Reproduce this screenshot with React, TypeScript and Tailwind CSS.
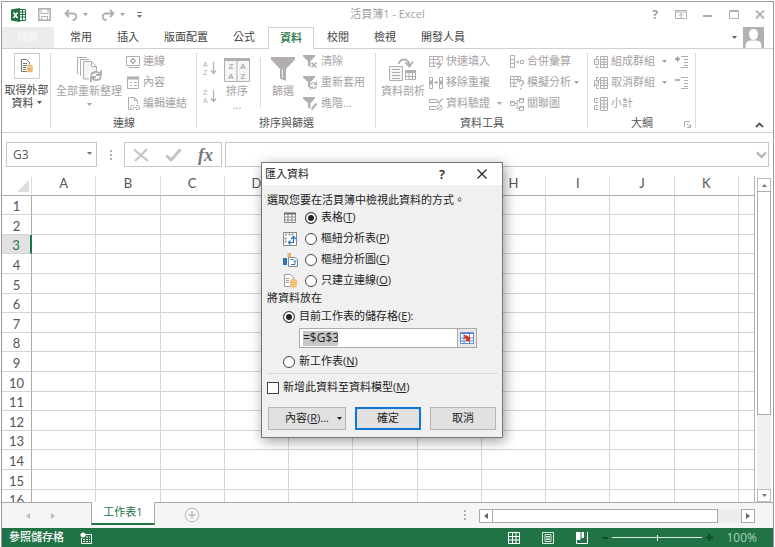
import type { ReactNode } from "react";
import clsx from "clsx";

const columns = ["A", "B", "C", "D", "E", "F", "G", "H", "I", "J", "K"];
const rows = Array.from({ length: 16 }, (_, i) => i + 1);
const tabs = ["常用", "插入", "版面配置", "公式", "資料", "校閱", "檢視", "開發人員"];

const gray = "#b2adb1";

function Icon({ w = 14, h = 14, children }: { w?: number; h?: number; children: ReactNode }) {
  return (
    <svg width={w} height={h} viewBox={`0 0 ${w} ${h}`} fill="none" stroke={gray} className="shrink-0" aria-hidden="true">
      {children}
    </svg>
  );
}

function Caret({ className }: { className?: string }) {
  return (
    <svg width="5" height="3" viewBox="0 0 5 3" className={clsx("shrink-0 fill-current", className)} aria-hidden="true">
      <path d="M0 0h5L2.500 3z" />
    </svg>
  );
}

function Dots() {
  return (
    <div className="flex flex-col gap-[2px]">
      <span className="size-[2px] bg-[#b0b0b0]" />
      <span className="size-[2px] bg-[#b0b0b0]" />
      <span className="size-[2px] bg-[#b0b0b0]" />
    </div>
  );
}

/* ---------- ribbon ---------- */

function Group({ label, className, children }: { label?: string; className?: string; children: ReactNode }) {
  return (
    <section className={clsx("relative flex shrink-0 flex-col pt-[2px]", className)}>
      <div className="flex h-[63px]">{children}</div>
      <div className="h-[18px] text-center leading-[18px] text-[#555]">{label}</div>
      <span className="absolute top-1 right-0 bottom-1 w-px bg-[#dcdcdc]" />
    </section>
  );
}

function BigButton({ icon, label, below, className }: { icon: ReactNode; label: string; below?: ReactNode; className?: string }) {
  return (
    <button className={clsx("flex shrink-0 flex-col items-center pt-1 whitespace-nowrap text-[#a5a1a4]", className)}>
      <span className="flex h-[29px] items-center">{icon}</span>
      <span className="leading-[14px]">{label}</span>
      {below}
    </button>
  );
}

function SmallButton({ icon, label, caret }: { icon: ReactNode; label: string; caret?: string }) {
  return (
    <button className="flex h-[21px] items-center gap-[3px] whitespace-nowrap text-[#a5a1a4]">
      {icon}
      <span>{label}</span>
      {caret && <Caret className={caret} />}
    </button>
  );
}

const ExternalDataIcon = () => (
  <Icon w={14} h={16}>
    <path d="M1.500 1.500h5l3 3v9h-8z" stroke="#777" fill="#fff" />
    <path d="M3 5.500h4M3 7.500h4M3 9.500h3M3 11.500h3" stroke="#777" />
    <path d="M7 8c0-2 6-2 6 0v5c0 2-6 2-6 0z" fill="#e9b568" stroke="#fff" strokeWidth=".5" />
    <path d="M7.500 8.500c1 1 4 1 5 0" stroke="#fff" strokeWidth=".6" />
  </Icon>
);

const RefreshAllIcon = () => (
  <Icon w={27} h={27}>
    <path d="M1.500 18V1.500H11M4.500 20V3.500H13" />
    <path d="M7.500 5.500h8l5 5v6h-7v6.500h-6zM15.500 5.500v5h5" fill="#f7f4f7" />
    <path d="M13 15h13v11H13z" fill="#fff" stroke="none" />
    <path d="M15 19.500c1-4 7-5 9-1M25 14v5h-5M25 20.500c-1 4-7 5-9 1M15 26v-5h5" strokeWidth="1.800" />
  </Icon>
);

const ConnectionIcon = () => (
  <Icon>
    <path d="M.5 1.500h13v9H.5zM3 12.500h11" />
    <path d="M7 3.500L9.500 6 7 8.500 4.500 6z" strokeWidth="1.500" />
  </Icon>
);

const PropertiesIcon = () => (
  <Icon>
    <path d="M1.500 1.500h11v11h-11z" />
    <path d="M1 2h12" strokeWidth="3" />
    <path d="M4 6.500h2M8 6.500h3M4 9.500h2M8 9.500h3" />
  </Icon>
);

const EditLinksIcon = () => (
  <Icon>
    <path d="M5 12.500H2.500V.5h6l3 3v3M8.500.5v3h3" />
    <path d="M8 12.500H6.500a2 2 0 010-4H8M10 8.500h1.500a2 2 0 010 4H10M7 10.500h4" />
  </Icon>
);

function SortIcon({ top, bottom }: { top: string; bottom: string }) {
  return (
    <svg width="14" height="18" viewBox="0 0 14 18" className="font-['Liberation_Sans',sans-serif]" aria-hidden="true">
      <text x="0" y="8" fontSize="7" fill={gray}>{top}</text>
      <text x="0" y="16" fontSize="7" fill={gray}>{bottom}</text>
      <path d="M10.500 3v11M8 11.500l2.500 3 2.500-3" fill="none" stroke={gray} strokeWidth="1.200" />
    </svg>
  );
}

const SortDialogIcon = () => (
  <svg width="26" height="24" viewBox="0 0 26 24" className="font-['Liberation_Sans',sans-serif]" aria-hidden="true">
    <path d="M.5 1.500h25v22H.5zM13 3v20" fill="#f7f4f7" stroke={gray} />
    <path d="M0 0h26v3H0z" fill={gray} />
    <g fontSize="8" fontWeight="700" fill={gray} textAnchor="middle">
      <text x="7" y="11">Z</text>
      <text x="7" y="21">A</text>
      <text x="19" y="11">A</text>
      <text x="19" y="21">Z</text>
    </g>
  </svg>
);

const FunnelIcon = () => (
  <Icon w={24} h={25}>
    <path d="M0 0h24v2.500L15 12v12l-6-2.500V12L0 2.500z" fill={gray} stroke="none" />
    <path d="M11.500 12v9" stroke="#e8e5e8" />
  </Icon>
);

const funnel = <path d="M0 0h12v1.500L7.500 6v6L5 11V6L0 1.500z" fill={gray} stroke="none" />;

const ClearIcon = () => (
  <Icon w={15}>{funnel}<path d="M8.500 7.500l5 5M13.500 7.500l-5 5" strokeWidth="1.500" /></Icon>
);

const ReapplyIcon = () => (
  <Icon w={15}>
    {funnel}
    <path d="M7 6h7v7H7z" fill="#fff" stroke="none" />
    <path d="M7.500 9c1-3 4-3 6-1M13.500 5.500V8.500H11M13.500 10c-1 3-4 3-5.500 1M7.500 13.500V11H10" strokeWidth="1.200" />
  </Icon>
);

const AdvancedIcon = () => (
  <Icon w={15}>{funnel}<path d="M13.500 6L8 12.500" stroke="#fff" strokeWidth="4" /><path d="M13.500 6.500L8.500 12.500" strokeWidth="2" /></Icon>
);

const TextToColumnsIcon = () => (
  <Icon w={28} h={24}>
    <path d="M9.500 6c2-6 10-6 11 1M16.500 4.500l4 4 3.500-5" strokeWidth="1.800" />
    <path d="M.5 8.500h13v14H.5z" fill="#f7f4f7" />
    <path d="M3 11.500h8M3 14.500h8M3 17.500h8M3 20.500h8" />
    <path d="M16.500 12.500h10v9h-10zM20 13v8M23.500 13v8M17 18.500h9" />
    <path d="M16 13.500h11" strokeWidth="3" />
  </Icon>
);

const FlashFillIcon = () => (
  <Icon>
    <path d="M7 11.500H.5v-10h13v4M1 4.500h9M1 8h7M4.500 2v9M9 2v3" />
    <path d="M11.500 5l-3 4h4l-4 4.500" strokeWidth="1.300" />
  </Icon>
);

const RemoveDuplicatesIcon = () => (
  <Icon>
    <path d="M.5 1.500h3v11h-3zM10.500 1.500h3v11h-3z" />
    <path d="M0 6.500h4M10 6.500h4" strokeWidth="4" />
    <path d="M5 6.500h4M7.500 5v3" />
  </Icon>
);

const ValidationIcon = () => (
  <Icon>
    <path d="M8 2.500H.5v3H8M7 9.500H.5v3H7" />
    <path d="M8 3.500L10 6l3.500-4.500" strokeWidth="1.300" />
    <circle cx="10.500" cy="10.500" r="2.500" />
    <path d="M9 12l3-3" />
  </Icon>
);

const ConsolidateIcon = () => (
  <Icon>
    <path d="M.5.5h4v12h-4zM.5 4.500h4M.5 8.500h4M10.500 5.500h3v3h-3z" />
    <path d="M5.500 7h3.500M7.500 5.500L9 7 7.500 8.500" />
  </Icon>
);

const WhatIfIcon = () => (
  <Icon>
    <path d="M7 10.500H.5v-10h10v3M1 3.500h9M1 7h6M4 1v9M7.500 1v5" />
    <path d="M9 6.500c0-3 4.500-2.500 4.500 0 0 1.500-2.500 2-2.500 4M11 12v1.500" strokeWidth="1.500" />
  </Icon>
);

const RelationIcon = () => (
  <Icon>
    <path d="M.5 4.500h4v4h-4zM9.500 1.500h4v4h-4zM9.500 9.500h4v4h-4zM4.500 6.500H7M7 3.500v8M7 3.500h2M7 11.500h2" />
    <path d="M9 2h5M9 10h5M0 5h5" strokeWidth="1.500" />
  </Icon>
);

function OutlineIcon({ slash }: { slash?: boolean }) {
  return (
    <Icon>
      <path d="M6.500 1.500h7v11h-7zM10 1.500v11M6.500 4.500h7M6.500 7h7M6.500 9.500h7M5 1.500H2.500v3M5 12.500H2.500v-2M.5 4.500h4v5h-4z" />
      {slash ? <path d="M0 11L6 3" /> : <path d="M1.500 7h2" />}
    </Icon>
  );
}

const SubtotalIcon = () => (
  <Icon>
    <path d="M6.500.5h7v13h-7zM10 .5v13M6.500 3.500h7M6.500 7h7M6.500 10h7" />
    <path d="M4.500 1.500h-4v4h4M4.500 8.500h-4v4h4M2 3.500h2M2 10.500h2" />
  </Icon>
);

function DetailIcon({ plus }: { plus?: boolean }) {
  return (
    <Icon>
      <path d="M6 1.500h7M9 4.500h4M9 7.500h4M9 10.500h4M6 12.500h7" />
      <path d={plus ? "M0 4h5M2.500 1.500v5" : "M0 4h5"} strokeWidth="1.500" stroke="#999" />
    </Icon>
  );
}

function Ribbon() {
  return (
    <div className="flex h-[84px] border-b border-[#d0d0d0]">
      <Group className="w-[49px]">
        <button className="flex flex-1 flex-col items-center pt-[2px] text-[#444]">
          <span className="flex size-[26px] items-center justify-center border border-[#ccc]">
            <ExternalDataIcon />
          </span>
          <span className="mt-1 leading-[13px] whitespace-nowrap">取得外部</span>
          <span className="flex items-center gap-[3px] leading-[13px]">資料<Caret className="text-[#555]" /></span>
        </button>
      </Group>
      <Group label="連線" className="w-[146px]">
        <BigButton className="ml-[5px]" icon={<RefreshAllIcon />} label="全部重新整理" below={<Caret className="mt-[5px]" />} />
        <div className="ml-1">
          <SmallButton icon={<ConnectionIcon />} label="連線" />
          <SmallButton icon={<PropertiesIcon />} label="內容" />
          <SmallButton icon={<EditLinksIcon />} label="編輯連結" />
        </div>
      </Group>
      <Group label="排序與篩選" className="w-[179px]">
        <div className="ml-[6px] flex flex-col gap-[10px] pt-2">
          <button aria-label="從 A 到 Z 排序"><SortIcon top="A" bottom="Z" /></button>
          <button aria-label="從 Z 到 A 排序"><SortIcon top="Z" bottom="A" /></button>
        </div>
        <BigButton className="ml-[7px]" icon={<SortDialogIcon />} label="排序" below={<span className="leading-[14px]">...</span>} />
        <span className="mt-[7px] ml-[10px] h-[50px] w-px bg-[#dcdcdc]" />
        <BigButton className="ml-[10px]" icon={<FunnelIcon />} label="篩選" />
        <div className="ml-2">
          <SmallButton icon={<ClearIcon />} label="清除" />
          <SmallButton icon={<ReapplyIcon />} label="重新套用" />
          <SmallButton icon={<AdvancedIcon />} label="進階..." />
        </div>
      </Group>
      <Group label="資料工具" className="w-[212px]">
        <BigButton className="ml-[5px]" icon={<TextToColumnsIcon />} label="資料剖析" />
        <div className="ml-1">
          <SmallButton icon={<FlashFillIcon />} label="快速填入" />
          <SmallButton icon={<RemoveDuplicatesIcon />} label="移除重複" />
          <SmallButton icon={<ValidationIcon />} label="資料驗證" caret="ml-1" />
        </div>
        <div className="ml-2">
          <SmallButton icon={<ConsolidateIcon />} label="合併彙算" />
          <SmallButton icon={<WhatIfIcon />} label="模擬分析" caret="ml-0" />
          <SmallButton icon={<RelationIcon />} label="關聯圖" />
        </div>
      </Group>
      <Group label="大綱" className="w-[108px]">
        <div className="ml-[6px]">
          <SmallButton icon={<OutlineIcon />} label="組成群組" caret="ml-1" />
          <SmallButton icon={<OutlineIcon slash />} label="取消群組" caret="ml-1" />
          <SmallButton icon={<SubtotalIcon />} label="小計" />
        </div>
        <div className="ml-2">
          <button aria-label="顯示詳細資料" className="flex h-[21px] items-center"><DetailIcon plus /></button>
          <button aria-label="隱藏詳細資料" className="flex h-[21px] items-center"><DetailIcon /></button>
        </div>
        <button aria-label="大綱設定" className="absolute right-[5px] bottom-1">
          <Icon w={7} h={7}><path d="M.5 6V.5H6M3 3l3.500 3.500M6.500 3v3.500H3" /></Icon>
        </button>
      </Group>
      <div className="flex flex-1 items-end justify-end pr-[9px] pb-1">
        <button aria-label="摺疊功能區">
          <Icon w={9} h={6}><path d="M1 5l3.500-3.500L8 5" stroke="#555" strokeWidth="1.800" /></Icon>
        </button>
      </div>
    </div>
  );
}

/* ---------- window frame ---------- */

function TitleBar() {
  return (
    <header className="grid h-[25px] grid-cols-[1fr_auto_1fr] items-center text-[#a0a0a0]">
      <div className="flex items-center pl-[9px]">
        <svg width="15" height="14" viewBox="0 0 15 14" aria-hidden="true">
          <path d="M8 1.500h6.500v11H8" fill="#fff" stroke="#217346" />
          <path d="M9 4h5M9 6.500h5M9 9h5M11.500 2v10" stroke="#217346" />
          <path d="M0 1.500L9 0v14L0 12.500z" fill="#217346" />
          <path d="M2.500 4.500l4 5.500M6.500 4.500l-4 5.500" stroke="#fff" strokeWidth="1.500" />
        </svg>
        <button aria-label="儲存" className="ml-3">
          <Icon w={13} h={13}>
            <path d="M.8.8h11.400v11.400H.8z" strokeWidth="1.500" />
            <path d="M3 1v4.500h7V1M3.500 12V8.500h6V12" />
          </Icon>
        </button>
        <button aria-label="復原" className="ml-[13px] flex items-center gap-[5px]">
          <Icon w={14} h={12}><path d="M5 1L1.500 4.500 5 8M2 4.500h6.500c5 0 5 6.500 0 6.500" strokeWidth="1.800" /></Icon>
          <Caret />
        </button>
        <button aria-label="重複" className="ml-[13px] flex items-center gap-[5px]">
          <Icon w={14} h={12}><path d="M9 1l3.500 3.500L9 8M12 4.500H5.500c-5 0-5 6.500 0 6.500" strokeWidth="1.800" /></Icon>
          <Caret />
        </button>
        <button aria-label="自訂快速存取工具列" className="ml-3 flex flex-col items-center gap-[2px] text-[#777]">
          <span className="h-px w-[5px] bg-[#777]" />
          <Caret />
        </button>
      </div>
      <h1 className="whitespace-nowrap">活頁簿1 - Excel</h1>
      <div className="flex items-center justify-end pr-2">
        <button aria-label="說明" className="text-[12px] leading-none font-bold">?</button>
        <button aria-label="功能區顯示選項" className="ml-[17px]">
          <Icon w={12} h={9}><path d="M.5.5h11v8H.5zM1 2h10M6 8V3.500M4 5.500l2-2 2 2" /></Icon>
        </button>
        <button aria-label="最小化" className="ml-[16px]">
          <Icon w={9} h={9}><path d="M0 6h9" strokeWidth="2" /></Icon>
        </button>
        <button aria-label="最大化" className="ml-[17px]">
          <Icon w={10} h={9}><path d="M.5.5h9v8h-9zM0 1.500h10" /></Icon>
        </button>
        <button aria-label="關閉" className="ml-[16px]">
          <Icon w={10} h={9}><path d="M1 .5l8 8M9 .5l-8 8" strokeWidth="1.800" /></Icon>
        </button>
      </div>
    </header>
  );
}

function TabBar() {
  return (
    <nav className="flex h-[22px] items-stretch border-b border-[#d0d0d0] text-[#444]">
      <button className="mr-1 w-[52px] bg-[#ececec] text-[#f8f8f8]">檔案</button>
      <div className="flex gap-px">
        {tabs.map((tab) => (
          <button
            key={tab}
            className={clsx(
              "whitespace-nowrap",
              tab === "資料" ? "-mb-px border border-b-0 border-[#d0d0d0] bg-white px-[11px] font-medium text-[#217346]" : "px-3",
            )}
          >
            {tab}
          </button>
        ))}
      </div>
      <button aria-label="帳戶" className="ml-auto flex items-center gap-[6px] pr-[9px] text-[#666]">
        <Caret />
        <svg width="21" height="21" viewBox="0 0 21 21" aria-hidden="true">
          <path d="M0 0h21v21H0z" fill="#b1b1b1" />
          <path d="M10.500 2c3 0 4.500 2 4.500 5s-2 6-4.500 6S6 10 6 7s1.500-5 4.500-5zM2.500 21c0-5 1-7 5-7.500h6c4 .5 5 2.500 5 7.500z" fill="#fff" />
        </svg>
      </button>
    </nav>
  );
}

function FormulaBar() {
  return (
    <div className="flex items-center px-1 py-[9px]">
      <div className="relative">
        <input aria-label="名稱方塊" defaultValue="G3" className="block h-[25px] w-[91px] border border-[#c6c6c6] px-[6px] text-[12px] text-[#555] outline-none" />
        <Caret className="pointer-events-none absolute top-[10px] right-[5px] text-[#777]" />
      </div>
      <div className="flex w-[27px] justify-center"><Dots /></div>
      <div className="flex h-[25px] w-[98px] items-center border border-[#c6c6c6]">
        <button aria-label="取消輸入" className="ml-2">
          <Icon w={16} h={14}><path d="M1 1.500l14 11.500M14 1L2 13" stroke="#c4c4c4" strokeWidth="2" /></Icon>
        </button>
        <button aria-label="輸入" className="ml-4">
          <Icon w={17} h={14}><path d="M1.500 7.500L6 12 15.500 1.500" stroke="#c4c4c4" strokeWidth="3" /></Icon>
        </button>
        <button aria-label="插入函數" className="ml-4 font-['Liberation_Serif',serif] text-[18px] leading-none font-bold text-[#777] italic">fx</button>
      </div>
      <div className="relative ml-[3px] flex-1">
        <input aria-label="資料編輯列" className="block h-[25px] w-full border border-[#c6c6c6] px-2 outline-none" />
        <svg width="11" height="8" viewBox="0 0 11 8" className="absolute top-[9px] right-[2px]" aria-hidden="true">
          <path d="M1 1.500l4.500 4.500L10 1.500" fill="none" stroke="#bbb" strokeWidth="2.500" />
        </svg>
      </div>
    </div>
  );
}

function Sheet() {
  return (
    <div className="flex min-h-0 flex-1">
      <div className="min-w-0 flex-1 overflow-hidden border-r border-[#b5b5b5]">
        <table className="w-full table-fixed border-separate border-spacing-0 font-[Lato,sans-serif] text-[13px] leading-none text-[#555]">
          <colgroup>
            <col className="w-[30px]" />
            {columns.map((c) => <col key={c} />)}
            <col className="w-[15px]" />
          </colgroup>
          <thead>
            <tr className="h-5">
              <th className="border-r border-b border-r-[#ddd] border-b-[#ababab] p-0">
                <svg width="12" height="12" viewBox="0 0 12 12" className="mt-px mr-[2px] ml-auto" aria-hidden="true">
                  <path d="M12 0v12H0z" fill="#ddd" />
                </svg>
              </th>
              {columns.map((c) => (
                <th key={c} scope="col" className="border-r border-b border-r-[#ddd] border-b-[#ababab] p-0 pb-1 font-normal">{c}</th>
              ))}
              <td className="border-b border-[#ababab] p-0" />
            </tr>
          </thead>
          <tbody>
            {rows.map((r) => (
              <tr key={r} className={r % 5 === 1 || r % 5 === 3 ? "h-[19px]" : "h-5"}>
                <th
                  scope="row"
                  className={clsx(
                    "border-b border-b-[#d4d4d4] p-0 pt-[3px] font-normal",
                    r === 3 ? "border-r-2 border-r-[#217346] bg-[#e1e1e1] text-[#217346]" : "border-r border-r-[#ababab]",
                  )}
                >
                  {r}
                </th>
                {columns.map((c) => <td key={c} className="border-r border-b border-[#d4d4d4] p-0" />)}
                <td className="border-b border-[#d4d4d4] p-0" />
              </tr>
            ))}
          </tbody>
        </table>
      </div>
      <div className="mx-[2px] mt-[2px] flex w-[14px] flex-col bg-[#f0f0f0]">
        <button aria-label="向上捲動" className="flex h-[14px] items-center justify-center border border-[#bbb] bg-white text-[#777]">
          <Caret className="rotate-180" />
        </button>
        <div className="-mt-px h-3/4 max-h-[224px] border border-[#ababab] bg-white" />
        <button aria-label="向下捲動" className="mt-auto flex h-[13px] items-center justify-center border border-[#bbb] bg-white text-[#777]">
          <Caret />
        </button>
      </div>
    </div>
  );
}

function ArrowIcon({ right }: { right?: boolean }) {
  return (
    <svg width="4" height="6" viewBox="0 0 4 6" className="fill-current" aria-hidden="true">
      <path d={right ? "M0 0l4 3-4 3z" : "M4 0L0 3l4 3z"} />
    </svg>
  );
}

function SheetTabs() {
  return (
    <div className="flex h-[26px] items-start border-t border-[#ababab] bg-[#f5f5f5] pr-[18px] text-[#bbb]">
      <div className="flex h-[25px] w-[89px] items-center gap-[21px] pl-6">
        <button aria-label="上一張工作表"><ArrowIcon /></button>
        <button aria-label="下一張工作表"><ArrowIcon right /></button>
      </div>
      <button className="-mt-px h-[23px] w-[64px] border-x border-b-2 border-x-[#ababab] border-b-[#217346] bg-white text-[#217346]">工作表1</button>
      <button aria-label="新增工作表" className="mt-1 ml-[29px]">
        <Icon w={16} h={16}>
          <circle cx="8" cy="8" r="6.800" stroke="#bbb" />
          <path d="M4.500 8h7M8 4.500v7" stroke="#bbb" strokeWidth="1.500" />
        </Icon>
      </button>
      <div className="mt-[7px] ml-auto"><Dots /></div>
      <div className="mt-[6px] ml-[13px] flex h-[14px] w-[276px] bg-[#ececec] text-[#666]">
        <button aria-label="向左捲動" className="flex w-[14px] items-center justify-center border border-[#ababab] bg-white"><ArrowIcon /></button>
        <div className="-ml-px w-[226px] border border-[#ababab] bg-white" />
        <button aria-label="向右捲動" className="ml-auto flex w-[14px] items-center justify-center border border-[#ababab] bg-white"><ArrowIcon right /></button>
      </div>
    </div>
  );
}

function StatusBar() {
  return (
    <footer className="flex h-[19px] items-center bg-[#217346] pr-4 pl-[7px] text-white">
      <span className="font-medium">參照儲存格</span>
      <button aria-label="錄製巨集" className="ml-4">
        <Icon w={12} h={12}>
          <path d="M5 2.500h6.500v9h-10V6" stroke="#fff" />
          <circle cx="3" cy="3" r="2.500" fill="#fff" stroke="none" />
          <path d="M3 7.500h7M3 9.500h7M6 5h4" stroke="#fff" strokeDasharray="2 1" />
        </Icon>
      </button>
      <button aria-label="標準模式" className="ml-auto">
        <Icon w={12} h={12}><path d="M.5.5h11v11H.5zM4.500 0v12M8 0v12M0 4.500h12M0 8h12" stroke="#fff" /></Icon>
      </button>
      <button aria-label="整頁模式" className="ml-[22px]">
        <Icon w={12} h={12}><path d="M.5.5h11v11H.5zM3 2.500h6v7H3zM4 4.500h4M4 6h4M4 7.500h4" stroke="#dcebe2" /></Icon>
      </button>
      <button aria-label="分頁預覽" className="ml-[22px]">
        <Icon w={12} h={12}>
          <path d="M.5 0v11.500h11V0" stroke="#fff" />
          <path d="M1 0h3.500v8H1zM5.500 0H8v6H5.500z" fill="#fff" stroke="none" />
        </Icon>
      </button>
      <button aria-label="縮小" className="ml-[14px] h-[2px] w-[6px] bg-[#0f4d2b]" />
      <input
        type="range"
        aria-label="顯示比例"
        className="ml-1 h-px w-[90px] appearance-none bg-[#dcebe2] [&::-webkit-slider-thumb]:h-[6px] [&::-webkit-slider-thumb]:w-px [&::-webkit-slider-thumb]:appearance-none [&::-webkit-slider-thumb]:bg-white"
      />
      <button aria-label="放大" className="ml-1">
        <Icon w={7} h={7}><path d="M0 3.500h7M3.500 0v7" stroke="#0f4d2b" strokeWidth="2" /></Icon>
      </button>
      <button className="ml-[13px] text-[12px] text-[#a9cfb9]">100%</button>
    </footer>
  );
}

/* ---------- dialog ---------- */

const radioClass =
  "size-3 shrink-0 appearance-none rounded-full border border-[#444] bg-white checked:bg-[#222] checked:shadow-[inset_0_0_0_2px_#fff]";

const TableIcon = () => (
  <Icon><path d="M1.500 2.500h11v9h-11zM5 3v8M9 3v8M1 6h12M1 9h12" stroke="#888" fill="#fff" /><path d="M1 2.500h12" stroke="#666" strokeWidth="2" /></Icon>
);

const PivotTableIcon = () => (
  <Icon>
    <path d="M.5.5h13v13H.5z" fill="#fff" stroke="#888" />
    <path d="M2 2.500h2M5.500 2.500h6M2.500 5.500v6" stroke="#999" strokeWidth="2" strokeDasharray="2 1" />
    <path d="M6 10.500h4.500V5M8 7l2.500-2.500L13 7M7.500 8.500l-2 2 2 2" stroke="#2f74b5" strokeWidth="1.200" />
  </Icon>
);

const PivotChartIcon = () => (
  <Icon w={15}>
    <path d="M0 5h4v7H0z" fill="#2f74b5" stroke="none" />
    <path d="M4.500 0h3.500v4H4.500z" fill="#e9b568" stroke="none" />
    <path d="M5.500 4.500h6l3 2v7h-9z" fill="#fff" stroke="#888" />
    <path d="M8 11.500h4V8M10.500 9L12 7.500 13.500 9M7.500 6.500h3" stroke="#2f74b5" />
  </Icon>
);

const ConnectionOnlyIcon = () => (
  <Icon>
    <path d="M1.500.5h6l3 3v9h-9z" fill="#fff" stroke="#999" />
    <path d="M3 4.500h3M3 6.500h3M3 8.500h3" stroke="#999" />
    <path d="M7 6c0-1.500 7-1.500 7 0v6.500c0 1.500-7 1.500-7 0z" fill="#efc27f" stroke="none" />
  </Icon>
);

const views = [
  { id: "table", icon: <TableIcon />, label: "表格", hotkey: "T" },
  { id: "pivot", icon: <PivotTableIcon />, label: "樞紐分析表", hotkey: "P" },
  { id: "chart", icon: <PivotChartIcon />, label: "樞紐分析圖", hotkey: "C" },
  { id: "connection", icon: <ConnectionOnlyIcon />, label: "只建立連線", hotkey: "O" },
];

function ImportDialog() {
  return (
    <div
      role="dialog"
      aria-labelledby="import-title"
      className="absolute top-[162px] left-[261px] w-[242px] border border-[#777] bg-[#f0f0f0] text-[#222] shadow-[2px_3px_12px_rgba(0,0,0,0.4)]"
    >
      <div className="flex h-[22px] items-center bg-white pr-[15px] pl-[3px]">
        <h2 id="import-title">匯入資料</h2>
        <button aria-label="說明" className="ml-auto text-[13px] leading-none font-semibold">?</button>
        <button aria-label="關閉" className="ml-[32px]">
          <Icon w={10} h={10}><path d="M.5.5l9 9M9.500.5l-9 9" stroke="#222" strokeWidth="1.200" /></Icon>
        </button>
      </div>
      <form className="px-[5px] pt-2 pb-[7px]" onSubmit={(e) => e.preventDefault()}>
        <p className="h-[14px] leading-[14px] whitespace-nowrap">選取您要在活頁簿中檢視此資料的方式。</p>
        {views.map((v) => (
          <div key={v.id} className="flex h-[21px] items-center pl-4">
            <span className="flex w-[22px]">{v.icon}</span>
            <input type="radio" name="view" id={v.id} defaultChecked={v.id === "table"} className={radioClass} />
            <label htmlFor={v.id} className="pl-1">{v.label}(<u>{v.hotkey}</u>)</label>
          </div>
        ))}
        <p className="h-[14px] leading-[14px]">將資料放在</p>
        <div className="mt-px flex h-[21px] items-center pl-4">
          <input type="radio" name="place" id="current" defaultChecked className={radioClass} />
          <label htmlFor="current" className="pl-1">目前工作表的儲存格(<u>E</u>):</label>
        </div>
        <div className="mt-px mr-[20px] ml-8 flex h-5 border border-[#aaa] bg-white">
          <div className="flex flex-1 items-center pl-[3px]">
            <input aria-label="儲存格" defaultValue="=$G$3" className="h-[15px] w-[35px] bg-[#c8c8c8] text-[12px] outline-none" />
          </div>
          <button type="button" aria-label="選取範圍" className="flex w-[19px] items-center justify-center border-l border-[#aaa] bg-[#e8e8e8]">
            <Icon w={14} h={12}>
              <path d="M.5.5h13v11H.5z" fill="#fff" stroke="#6c8fcb" />
              <path d="M0 1.500h14M0 6h14M0 9h14M4 0v12M9.500 0v12" stroke="#5b86cf" />
              <path d="M4 3l3 .5 2 1.500 1-1v5H5.500l1-1.500L4.500 6z" fill="#d8361c" stroke="none" />
            </Icon>
          </button>
        </div>
        <div className="mt-[3px] flex h-[21px] items-center pl-4">
          <input type="radio" name="place" id="new-sheet" className={radioClass} />
          <label htmlFor="new-sheet" className="pl-1">新工作表(<u>N</u>)</label>
        </div>
        <hr className="mt-px border-[#d8d8d8]" />
        <div className="mt-[3px] flex h-[21px] items-center">
          <input type="checkbox" id="model" className="size-3 appearance-none border border-[#444] bg-white" />
          <label htmlFor="model" className="pl-1">新增此資料至資料模型(<u>M</u>)</label>
        </div>
        <div className="mt-[9px] flex h-[23px] gap-[9px] px-px">
          <button type="button" className="flex w-[78px] items-center justify-end gap-2 border border-[#b5b5b5] bg-[#e1e1e1] pr-[3px]">
            <span>內容(<u>R</u>)...</span>
            <Caret />
          </button>
          <button type="submit" className="w-[66px] border-2 border-[#0f74d4] bg-[#e1e1e1]">確定</button>
          <button type="button" className="w-[66px] border border-[#b5b5b5] bg-[#e1e1e1]">取消</button>
        </div>
      </form>
    </div>
  );
}

export default function App() {
  return (
    <div className="relative h-screen overflow-hidden bg-white px-px pt-px font-['Open_Sans','Noto_Sans_CJK_TC',sans-serif] text-[11px]">
      <div className="flex h-full flex-col border-x border-t border-[#999]">
        <TitleBar />
        <TabBar />
        <Ribbon />
        <FormulaBar />
        <Sheet />
        <SheetTabs />
        <StatusBar />
      </div>
      <ImportDialog />
    </div>
  );
}
